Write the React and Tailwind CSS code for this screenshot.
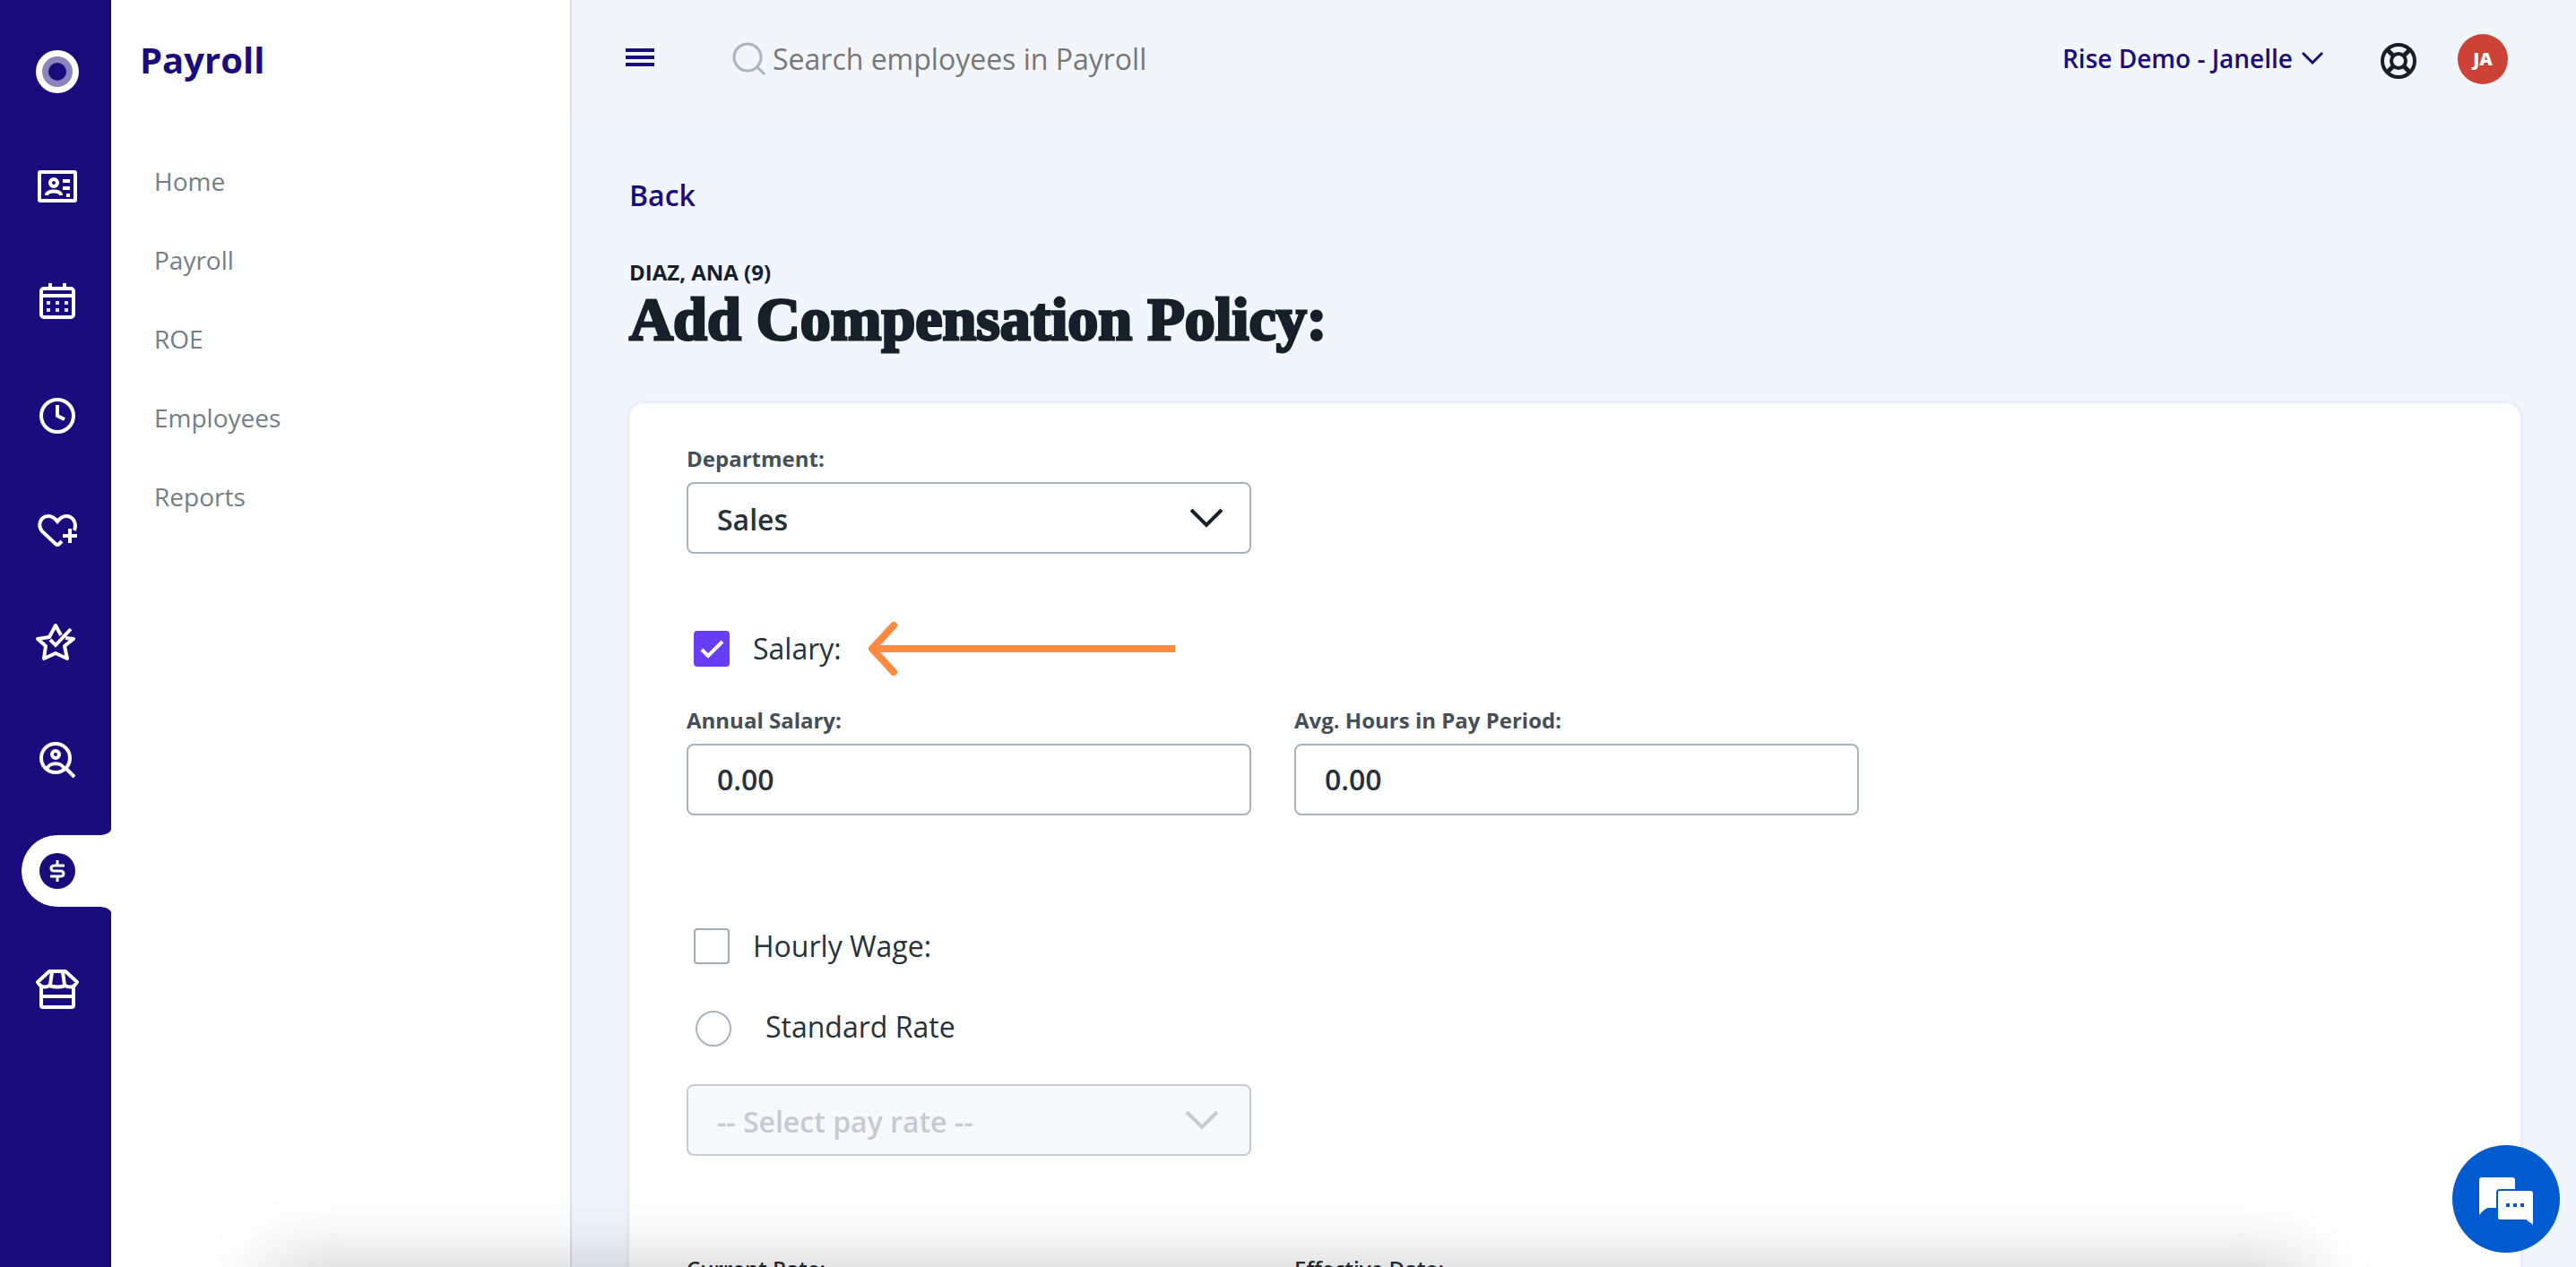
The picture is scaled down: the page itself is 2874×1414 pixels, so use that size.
import { useState } from 'react';

const menuItems = ["Home", "Payroll", "ROE", "Employees", "Reports"];

const railItems = [
  {
    label: "People",
    icon: (
      <>
        <rect x="12" y="16" width="40" height="32" rx="1" />
        <circle cx="28" cy="28" r="4" />
        <path d="M20 42c0-6 16-6 16 0" />
        <path d="M38 26h8M38 34h8M42 42h4" />
      </>
    )
  },
  {
    label: "Calendar",
    icon: (
      <>
        <rect x="14" y="18" width="36" height="32" rx="3" />
        <path d="M24 12v6M40 12v6M14 26h36" />
        <path d="M20 34h4M30 34h4M40 34h4M20 42h4M30 42h4M40 42h4" opacity="0.85" />
      </>
    )
  },
  {
    label: "Time",
    icon: (
      <>
        <circle cx="32" cy="32" r="18" />
        <path d="M32 20v12l8 4" />
      </>
    )
  },
  {
    label: "Benefits",
    icon: (
      <>
        <path d="M51 32c3-9-2-16-9-16-4 0-7 2-10 6-3-4-6-6-10-6-8 0-13 9-7 17l15 14q2 2 4 0l3-3" />
        <path d="M46 30v16M38 38h16" />
      </>
    )
  },
  {
    label: "Performance",
    icon: (
      <>
        <path d="M41 24l9 1-10 8 3 14-13-6-13 6 2-14-9-8 13-2 7-13 6 11" strokeLinejoin="round" />
        <path d="M24 26l6 6L47 14" />
      </>
    )
  },
  {
    label: "Recruiting",
    icon: (
      <>
        <circle cx="30" cy="30" r="16" />
        <circle cx="30" cy="26" r="4" />
        <path d="M20 43c2-9 18-9 20 0M42 42l9 9" />
      </>
    )
  },
  { label: "Payroll", active: true },
  {
    label: "Store",
    icon: (
      <>
        <path d="M14 28v22q0 2 2 2h32q2 0 2-2V28M14 40h36" />
        <path d="M23 12h18l13 12-3 4q-5 3-10 0-9 3-18 0-5 3-10 0l-3-4zM26 13l-2 14M38 13l2 14" strokeLinejoin="round" />
      </>
    )
  }
];

function Chevron({ className }) {
  return (
    <svg viewBox="0 0 40 24" className={className} fill="none" stroke="currentColor" strokeWidth="4" aria-hidden="true">
      <path d="M3 3l17 17L37 3" />
    </svg>
  );
}

function ActiveIcon() {
  return (
    <svg viewBox="0 0 100 96" className="w-[100px] h-24" aria-hidden="true">
      <path d="M100 2c-2 4-7 6-14 6H40a40 40 0 0 0 0 80h46c7 0 12 2 14 6z" fill="#fff" />
      <circle cx="40" cy="48" r="20" fill="#1a0c7c" />
      <path
        d="M48 42h-11q-4 0-4 3t4 3h6q4 0 4 3t-4 3H32M40 36v6M40 54v6"
        fill="none"
        stroke="#fff"
        strokeWidth="3"
      />
    </svg>
  );
}

function Rail() {
  return (
    <nav aria-label="Modules" className="w-[124px] shrink-0 bg-[#1a0c7c] pt-4 z-20">
      <a href="#home" aria-label="Dashboard" className="flex h-32 items-center pl-10">
        <svg viewBox="0 0 48 48" className="size-12" aria-hidden="true">
          <circle cx="24" cy="24" r="24" fill="#fff" />
          <circle cx="24" cy="24" r="17" fill="#8c85bd" />
          <circle cx="24" cy="24" r="10" fill="#1a0c7c" />
        </svg>
      </a>
      {railItems.map((item) => (
        <a
          key={item.label}
          href={`#${item.label.toLowerCase()}`}
          aria-label={item.label}
          className={item.active ? "flex h-32 items-center justify-end pb-2" : "flex h-32 items-center pl-8"}
        >
          {item.active ? (
            <ActiveIcon />
          ) : (
            <svg viewBox="0 0 64 64" className="size-16" fill="none" stroke="#fff" strokeWidth="4" aria-hidden="true">
              {item.icon}
            </svg>
          )}
        </a>
      ))}
    </nav>
  );
}

function SideMenu() {
  return (
    <aside className="w-[514px] shrink-0 border-r-2 border-[#dfe0e3] bg-white">
      <h2 className="flex h-[134px] items-center pl-8 text-[40px] font-bold text-[#1a0c7c]">Payroll</h2>
      <ul className="pt-6">
        {menuItems.map((item) => (
          <li key={item}>
            <a href={`#${item.toLowerCase()}`} className="flex h-[88px] items-center pl-12 text-[28px] text-[#737e88]">
              {item}
            </a>
          </li>
        ))}
      </ul>
    </aside>
  );
}

function Header() {
  return (
    <header className="flex h-[132px] items-center bg-[#f2f5fa] pl-[60px] pr-[76px] text-[#1a0c7c]">
      <button aria-label="Toggle menu" className="shrink-0 pb-1">
        <svg viewBox="0 0 32 24" className="w-8 h-6" stroke="currentColor" strokeWidth="4" aria-hidden="true">
          <path d="M0 4h32M0 12h32M0 20h32" />
        </svg>
      </button>
      <label htmlFor="search" className="ml-[86px] shrink-0">
        <span className="sr-only">Search employees</span>
        <svg viewBox="0 0 40 40" className="size-10" fill="none" stroke="#aab5be" strokeWidth="3" aria-hidden="true">
          <circle cx="18" cy="18" r="15" />
          <path d="M28 28l9 9" />
        </svg>
      </label>
      <input
        id="search"
        type="text"
        placeholder="Search employees in Payroll"
        className="ml-[6px] h-16 min-w-0 flex-1 bg-transparent pb-[2px] text-[32px] text-[#27313b] outline-none placeholder:text-[#777777]"
      />
      <button className="flex shrink-0 items-center gap-[10px] pb-[2px] text-[28px] font-semibold">
        Rise Demo - Janelle
        <svg viewBox="0 0 24 16" className="w-6 h-4" fill="none" stroke="currentColor" strokeWidth="3" aria-hidden="true">
          <path d="M1 2l11 11L23 2" />
        </svg>
      </button>
      <button aria-label="Help" className="ml-16 shrink-0 pt-1 text-[#15202b]">
        <svg viewBox="0 0 40 40" className="size-10" fill="none" stroke="currentColor" strokeWidth="4" aria-hidden="true">
          <circle cx="20" cy="20" r="18" />
          <circle cx="20" cy="20" r="8" />
          <path d="M7 7l8 8M33 7l-8 8M7 33l8-8M33 33l-8-8" strokeWidth="5" />
        </svg>
      </button>
      <button className="ml-[46px] flex size-14 shrink-0 items-center justify-center rounded-full bg-[#cc4237] text-[20px] font-extrabold text-white">
        JA
      </button>
    </header>
  );
}

function Field({ id, label, children }) {
  return (
    <div className="flex w-[630px] flex-col gap-[10px]">
      <label htmlFor={id} className="text-[24px] leading-8 font-bold text-[#454f59]">{label}</label>
      {children}
    </div>
  );
}

function Select({ id, disabled, options, ...rest }) {
  return (
    <div className="relative w-[630px]">
      <select
        id={id}
        disabled={disabled}
        className="h-20 w-full appearance-none rounded-lg border-2 border-[#a9b3bd] bg-white px-8 pt-1 text-[32px] font-semibold text-[#27313b] disabled:border-[#c5cbd1] disabled:bg-[#f6f8fc] disabled:text-[#c5cbd1] disabled:opacity-100"
        {...rest}
      >
        {options.map((option) => (
          <option key={option}>{option}</option>
        ))}
      </select>
      <Chevron
        className={
          disabled
            ? "pointer-events-none absolute right-[35px] top-7 w-10 h-6 text-[#c5cbd1]"
            : "pointer-events-none absolute right-[30px] top-7 w-10 h-6 text-[#15202b]"
        }
      />
    </div>
  );
}

function TextInput({ id, value, onChange }) {
  return (
    <input
      id={id}
      type="text"
      value={value}
      onChange={onChange}
      className="h-20 w-full rounded-lg border-2 border-[#a9b3bd] bg-white px-8 pb-[2px] text-[32px] font-semibold text-[#27313b]"
    />
  );
}

function Checkbox({ id, label, checked, onChange }) {
  return (
    <div className="flex h-12 items-center pl-2">
      <span className="relative flex size-10">
        <input
          id={id}
          type="checkbox"
          checked={checked}
          onChange={onChange}
          className="size-10 appearance-none rounded-sm border-2 border-[#a0abb5] bg-white checked:border-[#673df5] checked:bg-[#673df5]"
        />
        {checked && (
          <svg viewBox="0 0 40 40" className="pointer-events-none absolute inset-0 size-10" fill="none" stroke="#fff" strokeWidth="4" aria-hidden="true">
            <path d="M9 21l7 7L32 12" />
          </svg>
        )}
      </span>
      <label htmlFor={id} className="pl-[26px] text-[32px] text-[#27313b]">{label}</label>
    </div>
  );
}

export default function App() {
  const [department, setDepartment] = useState("Sales");
  const [salary, setSalary] = useState(true);
  const [hourly, setHourly] = useState(false);
  const [standardRate, setStandardRate] = useState(false);
  const [annualSalary, setAnnualSalary] = useState("0.00");
  const [avgHours, setAvgHours] = useState("0.00");
  const [currentRate, setCurrentRate] = useState("0.00");
  const [effectiveDate, setEffectiveDate] = useState("");

  return (
    <div className="flex h-screen overflow-hidden bg-[#f1f5fe] font-['Open_Sans',sans-serif]">
      <Rail />
      <SideMenu />

      <div className="min-w-0 flex-1">
        <Header />
        <main className="pt-[62px] pl-16 pr-[62px]">
          <a href="#back" className="text-[32px] leading-[48px] font-semibold text-[#1a0c7c]">Back</a>
          <p className="mt-[46px] text-[24px] leading-8 font-bold text-[#15202b]">DIAZ, ANA (9)</p>
          <h1 className="mt-1 font-['Liberation_Serif',serif] text-[68px] leading-[64px] font-bold text-[#15202b] [-webkit-text-stroke:3px_#15202b]">
            Add Compensation Policy:
          </h1>

          <form className="mt-[62px] rounded-2xl bg-white px-16 pt-[46px] pb-16 shadow-[0_0_4px_1px_rgba(40,40,140,0.08)]">
            <Field id="department" label="Department:">
              <Select
                id="department"
                options={["Sales", "Marketing"]}
                value={department}
                onChange={(e) => setDepartment(e.target.value)}
              />
            </Field>

            <div className="mt-[82px] flex items-center">
              <Checkbox id="salary" label="Salary:" checked={salary} onChange={() => setSalary(!salary)} />
              {/* Points at the salary option */}
              <svg viewBox="0 0 344 64" className="-my-2 ml-7 w-[344px] h-16" fill="none" stroke="#ff8a40" strokeWidth="8" aria-hidden="true">
                <path d="M6 32h338" />
                <path d="M30 6L6 32l24 26" strokeLinecap="round" strokeLinejoin="round" />
              </svg>
            </div>
            <div className="mt-10 flex flex-wrap gap-12">
              <Field id="annualSalary" label="Annual Salary:">
                <TextInput id="annualSalary" value={annualSalary} onChange={(e) => setAnnualSalary(e.target.value)} />
              </Field>
              <Field id="avgHours" label="Avg. Hours in Pay Period:">
                <TextInput id="avgHours" value={avgHours} onChange={(e) => setAvgHours(e.target.value)} />
              </Field>
            </div>

            <div className="mt-[122px]">
              <Checkbox id="hourly" label="Hourly Wage:" checked={hourly} onChange={() => setHourly(!hourly)} />
            </div>
            <div className="mt-11 flex h-12 items-center pl-[10px]">
              <input
                id="standardRate"
                type="radio"
                checked={standardRate}
                onChange={() => setStandardRate(true)}
                className="size-10 appearance-none rounded-full border-2 border-[#a9b3bd] bg-white checked:border-[12px] checked:border-[#673df5]"
              />
              <label htmlFor="standardRate" className="pb-1 pl-[38px] text-[32px] text-[#27313b]">Standard Rate</label>
            </div>
            <div className="mt-[38px]">
              <Select id="payRate" disabled aria-label="Pay rate" options={["-- Select pay rate --"]} />
            </div>

            <div className="mt-[110px] flex flex-wrap gap-12">
              <div className="flex w-[630px] flex-col gap-[10px]">
                <label htmlFor="currentRate" className="text-[24px] leading-8 font-semibold text-[#27313b]">Current Rate:</label>
                <TextInput id="currentRate" value={currentRate} onChange={(e) => setCurrentRate(e.target.value)} />
              </div>
              <div className="flex w-[630px] flex-col gap-[10px]">
                <label htmlFor="effectiveDate" className="text-[24px] leading-8 font-semibold text-[#27313b]">Effective Date:</label>
                <TextInput id="effectiveDate" value={effectiveDate} onChange={(e) => setEffectiveDate(e.target.value)} />
              </div>
            </div>
          </form>
        </main>
      </div>

      {/* Soft shade along the bottom edge */}
      <div className="pointer-events-none fixed top-full left-[300px] right-[300px] z-10 h-60 shadow-[0_0_76px_rgba(0,0,0,0.22)]" />

      <button aria-label="Open chat" className="fixed right-[18px] bottom-4 z-20 flex size-[120px] items-center justify-center rounded-full bg-[#005bd0]">
        <svg viewBox="0 0 120 120" className="size-[120px]" aria-hidden="true">
          <path d="M33 36h34q3 0 3 3v31H40q-3 0-10 8V39q0-3 3-3z" fill="#fff" />
          <path d="M53 50h34q4 0 4 4v37l-9-7H53q-3 0-3-3V53q0-3 3-3z" fill="#fff" stroke="#005bd0" strokeWidth="2" />
          <path d="M60 67h4M68 67h4M76 67h4" stroke="#005bd0" strokeWidth="4" />
        </svg>
      </button>
    </div>
  );
}
